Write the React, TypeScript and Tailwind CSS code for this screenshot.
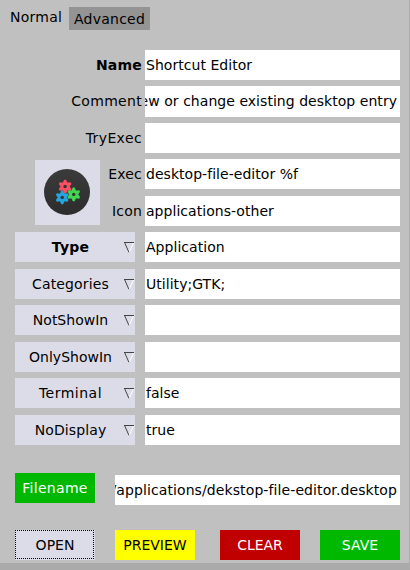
import React from "react";

type Field = {
  label: string;
  value: string;
  bold?: boolean;
  area: string;
  end?: boolean;
  tracking?: string;
};

const entries: Field[] = [
  { label: "Name", value: "Shortcut Editor", bold: true, area: "h-[30px] mb-[6px]", tracking: "tracking-[0.2px]" },
  {
    label: "Comment",
    value: "New or change existing desktop entry",
    area: "h-[31px] mb-[6px] pb-px",
    end: true,
    tracking: "tracking-[0.3px]",
  },
  { label: "TryExec", value: "", area: "h-[30px] mb-[6px]", tracking: "tracking-[0.4px]" },
  { label: "Exec", value: "desktop-file-editor %f", area: "h-[30px] mb-[7px]", tracking: "tracking-[0.2px]" },
  { label: "Icon", value: "applications-other", area: "h-[30px] mb-[6px]", tracking: "tracking-[0.2px]" },
];

const menus: Field[] = [
  { label: "Type", value: "Application", bold: true, area: "mb-[7px]", tracking: "tracking-[0.2px]" },
  { label: "Categories", value: "Utility;GTK;", area: "mb-[6px]", tracking: "tracking-[0.15px]" },
  { label: "NotShowIn", value: "", area: "mb-[7px]", tracking: "tracking-normal" },
  { label: "OnlyShowIn", value: "", area: "mb-[6px]", tracking: "tracking-normal" },
  { label: "Terminal", value: "false", area: "mb-[7px]", tracking: "tracking-[0.5px]" },
  { label: "NoDisplay", value: "true", area: "", tracking: "tracking-[0.1px]" },
];

function TextField({ value, end, tall }: { value: string; end?: boolean; tall?: boolean }) {
  return (
    <div
      className={`flex h-full min-w-0 flex-1 items-center overflow-hidden whitespace-nowrap bg-white ${
        end ? "justify-end pr-[3px]" : "pl-px"
      } ${tall ? "pb-px" : ""}`}
    >
      <span className="shrink-0 tracking-[0.04px]">{value}</span>
    </div>
  );
}

function Gear({ x, y, color }: { x: number; y: number; color: string }) {
  return (
    <g transform={`translate(${x} ${y})`}>
      <g fill={color}>
        <circle r="4.3" />
        {[0, 60, 120, 180, 240, 300].map((a) => (
          <path key={a} d="M-2.5 -3.2L-1 -6.8H1L2.5 -3.2Z" transform={`rotate(${a})`} />
        ))}
      </g>
      <circle r="1.7" fill="#333" />
    </g>
  );
}

function AppIcon() {
  return (
    <svg width="65" height="65" viewBox="0 0 65 65">
      <defs>
        <linearGradient id="disc" x1="0" y1="0" x2="0" y2="1">
          <stop offset="0" stopColor="#3b3b3b" />
          <stop offset="1" stopColor="#2c2c2c" />
        </linearGradient>
      </defs>
      <circle cx="32" cy="32" r="23" fill="url(#disc)" />
      <Gear x={30.1} y={26.5} color="#fc4f63" />
      <Gear x={38.7} y={34.4} color="#43d551" />
      <Gear x={27.2} y={37.4} color="#27a4dc" />
    </svg>
  );
}

function Arrow() {
  return (
    <svg className="mt-[10px] self-start" width="10" height="11" viewBox="0 0 10 11" fill="none">
      <path d="M9.4 1L5.3 10.3" stroke="#fff" />
      <path d="M0.8 1L4.9 10.3" stroke="#444" />
      <path d="M0 0.5H10" stroke="#444" />
    </svg>
  );
}

export default function App() {
  return (
    <div className="h-[570px] w-[410px] overflow-hidden bg-[#aaaaaa] font-['DejaVu_Sans',sans-serif] text-[14px] leading-[16px] text-black">
      <div className="flex h-[563px] w-[409px] flex-col bg-[#c0c0c0]">
        <div className="flex h-[50px] items-start pl-[10px] pt-[7px]">
          <div className="mt-[2px] w-[59px] tracking-[0.25px]">Normal</div>
          <div className="flex h-[23px] w-[81px] items-center justify-center bg-[#949494] tracking-[0.25px]">
            Advanced
          </div>
        </div>

        <div className="grid grid-cols-[145px_255px]">
          <div className="flex flex-col">
            {entries.slice(0, 3).map((f) => (
              <div
                key={f.label}
                className={`flex items-center justify-end whitespace-nowrap pr-[3px] ${f.area} ${f.tracking} ${
                  f.bold ? "font-bold" : ""
                }`}
              >
                {f.label}
              </div>
            ))}
            <div className="flex h-[73px] pl-[35px]">
              <div className="mt-px h-[65px] w-[65px] bg-[#dcdce8]">
                <AppIcon />
              </div>
              <div className="flex flex-1 flex-col">
                {entries.slice(3).map((f) => (
                  <div key={f.label} className={`flex items-center justify-end pr-[3px] ${f.area} ${f.tracking}`}>
                    {f.label}
                  </div>
                ))}
              </div>
            </div>
          </div>
          <div className="flex flex-col">
            {entries.map((f) => (
              <div key={f.label} className={`flex ${f.end ? "mb-[6px] h-[31px]" : f.area}`}>
                <TextField value={f.value} end={f.end} tall={f.end} />
              </div>
            ))}
          </div>
        </div>

        <div className="flex flex-col pl-[15px]">
          {menus.map((m) => (
            <div key={m.label} className={`flex h-[30px] w-[385px] gap-[10px] ${m.area}`}>
              <button className="flex w-[120px] items-center bg-[#dcdce8]">
                <span className={`w-[109px] pl-[2px] text-center ${m.tracking} ${m.bold ? "font-bold" : ""}`}>
                  {m.label}
                </span>
                <Arrow />
              </button>
              <TextField value={m.value} />
            </div>
          ))}
        </div>

        <div className="mt-[28px] flex w-[400px] items-start gap-[20px] pl-[15px]">
          <button className="h-[30px] w-[80px] bg-[#00b800] tracking-[0.3px] text-white">Filename</button>
          <div className="mt-[2px] flex h-[30px] min-w-0 flex-1 tracking-[0.1px]">
            <div className="flex h-full min-w-0 flex-1 items-center justify-end overflow-hidden whitespace-nowrap bg-white pr-[3px]">
              <span className="shrink-0">/applications/dekstop-file-editor.desktop</span>
            </div>
          </div>
        </div>

        <div className="mt-[25px] flex h-[30px] pl-[15px]">
          <button className="relative w-[80px] bg-[#dcdce8]">
            OPEN
            <svg className="absolute left-0 top-0" width="80" height="30" fill="none">
              <path
                d="M0 0.5H79M0 28.5H79M0.5 0V29M78.5 0V29"
                stroke="#000"
                strokeDasharray="1 1"
              />
            </svg>
          </button>
          <button className="ml-[20px] w-[80px] bg-[#ffff00]">PREVIEW</button>
          <button className="ml-[25px] w-[80px] bg-[#c00000] text-white">CLEAR</button>
          <button className="ml-[20px] w-[80px] bg-[#00b800] text-white">SAVE</button>
        </div>
      </div>
    </div>
  );
}
